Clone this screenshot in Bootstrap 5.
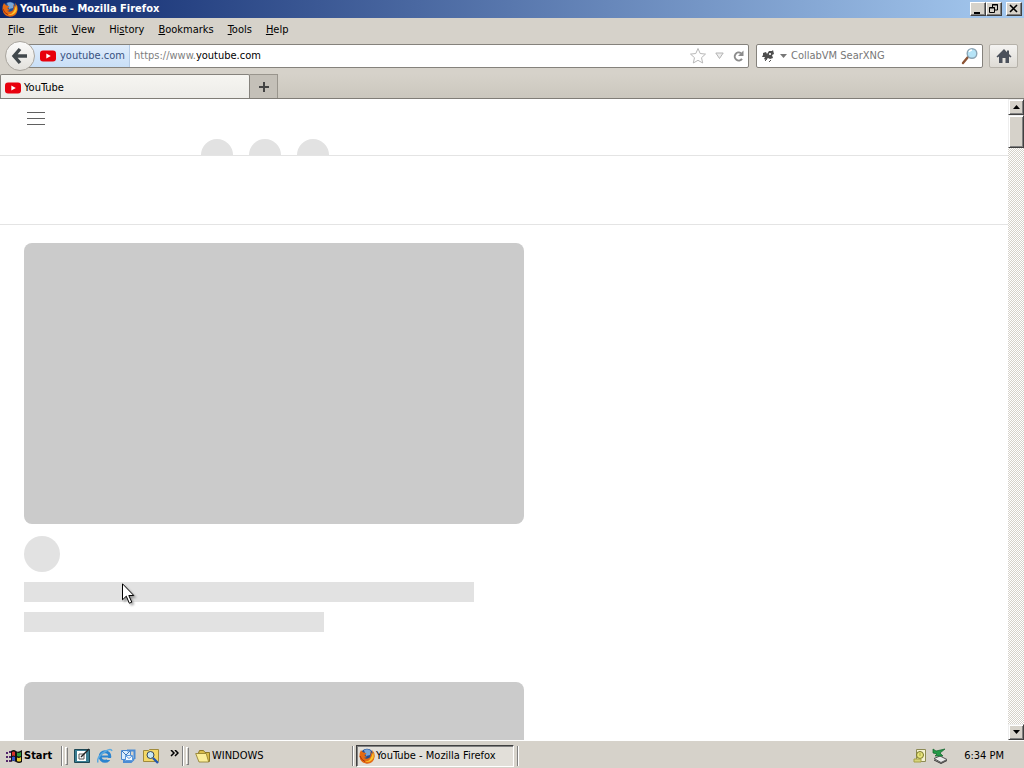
<!DOCTYPE html>
<html lang="en">
<head>
<meta charset="utf-8">
<meta name="viewport" content="width=device-width, initial-scale=1">
<title>YouTube - Mozilla Firefox</title>
<link href="https://cdn.jsdelivr.net/npm/bootstrap@5.3.0/dist/css/bootstrap.min.css" rel="stylesheet">
<style>
  :root { --face: #d6d2ca; --lo: #808080; }
  body { font: 11px/14px "DejaVu Sans Condensed", "DejaVu Sans", sans-serif; color: #000; background: var(--face); cursor: default; }
  button, input { font: inherit; color: inherit; }
  button { border: 0; padding: 0; background: none; }
  svg { display: block; flex: none; }
  .titlebar { height: 18px; padding: 0 2px; color: #fff; background: linear-gradient(90deg, #0b256b, #a6caf0); }
  .titlebar h1 { font-size: 11px; line-height: 18px; font-weight: 700; padding-left: 2px; }
  .winbtn { width: 16px; height: 14px; background: var(--face); border: 1px solid; border-color: #fff #404040 #404040 #fff; box-shadow: inset -1px -1px var(--lo); }
  .menubar { height: 22px; padding: 1px 0 0 8px; gap: 14px; }
  .toolbar-nav { height: 34px; padding: 0 6px 2px 5px; }
  .backbtn { width: 30px; height: 30px; border-radius: 50%; border: 1px solid #aaa69f; background: linear-gradient(#fbfbfa, #e3e1dc); z-index: 2; margin-right: -15px; }
  .field { height: 24px; background: #fff; border: 1px solid #85827c; border-radius: 2px; }
  .field input { border: 0; padding: 0; outline: 0; background: transparent; min-width: 0; }
  .identity { width: 109px; padding-left: 19px; gap: 4px; color: #38517f; background: linear-gradient(#dfecfb, #c9dff7); border-right: 1px solid #b5cbe5; }
  .url-prefix { color: #808080; }
  .searchbox { width: 227px; margin: 0 6px 0 7px; }
  .searchbox input::placeholder { color: #777; opacity: 1; }
  .homebtn { width: 29px; height: 24px; border: 1px solid #b6b2aa; border-radius: 2px; background: linear-gradient(#f4f3f1, #dedbd5); }
  .tabstrip { height: 25px; border-bottom: 1px solid #807d77; background: linear-gradient(var(--face), #cbc7be); }
  .tab-active { width: 250px; height: 24px; padding: 2px 0 0 4px; gap: 3px; background: linear-gradient(#f6f5f1, #edece8); border: 1px solid #85827c; border-width: 1px 1px 0; border-radius: 2px 2px 0 0; }
  .tab-new { width: 28px; height: 24px; background: #c4c0b8; border: 1px solid #99958d; border-width: 1px 1px 0 0; }
  .viewport { min-height: 0; background: #fff; }
  .masthead { height: 57px; flex: none; border-bottom: 1px solid #e4e4e4; }
  .menubtn { margin: 13px 0 0 27px; height: 13px; }
  .masthead-dots { margin: 40px 0 0 156px; gap: 16px; }
  .dot { width: 32px; height: 32px; border-radius: 50%; background: #e2e2e2; }
  .chipbar { height: 69px; flex: none; border-bottom: 1px solid #e4e4e4; }
  .feed { padding: 18px 24px 0; gap: 50px; }
  .thumb { width: 500px; height: 281px; border-radius: 8px; background: #cbcbcb; margin-bottom: 12px; }
  .avatar { width: 36px; height: 36px; border-radius: 50%; background: #e2e2e2; margin-bottom: 10px; }
  .textline { width: 450px; height: 20px; background: #e2e2e2; margin-bottom: 10px; }
  .textline-short { width: 300px; margin-bottom: 0; }
  .scroll { width: 16px; background: repeating-conic-gradient(#fff 0 25%, #d6d2ca 0 50%) 0 0 / 2px 2px; }
  .scroll button, .thumbgrip { background: var(--face); border: 1px solid; border-color: #eee #404040 #404040 #eee; box-shadow: inset 1px 1px #fff, inset -1px -1px var(--lo); }
  .scroll button { height: 16px; }
  .thumbgrip { height: 33px; }
  .taskbar { height: 28px; border-top: 1px solid #fff; padding: 2px 4px 0; }
  .startbtn { width: 52px; gap: 1px; font-weight: 700; margin-left: 2px; }
  .rule { width: 1px; height: 20px; background: var(--lo); box-shadow: 1px 0 #fff; flex: none; margin-left: 3px; }
  .grip { width: 3px; height: 18px; border: 1px solid; border-color: #fff var(--lo) var(--lo) #fff; flex: none; margin-left: 3px; }
  .quick { gap: 7px; margin-left: 6px; }
  .taskbtn { width: 160px; height: 22px; padding-left: 3px; gap: 1px; margin-left: 3px; }
  .taskbtn-on { width: 158px; background: #e2dfd9; border: 1px solid; border-color: #404040 #fff #fff #404040; box-shadow: inset 1px 1px var(--lo); padding-left: 2px; }
  .pointer { left: 122px; top: 583px; pointer-events: none; filter: drop-shadow(2px 2px 1px #0005); }
</style>
</head>
<body class="d-flex flex-column vh-100 overflow-hidden">

<svg class="d-none" aria-hidden="true">
  <symbol id="yt" viewBox="0 0 16 12"><rect width="16" height="11" y=".5" rx="3" fill="#e8000d"/><path d="M6.3 3.4v5.2L10.8 6z" fill="#fff"/></symbol>
  <symbol id="fox" viewBox="0 0 16 16">
    <circle cx="8" cy="8" r="7.2" fill="#254f94"/><path d="M5 2q4-2 7 1l-1 4-4 1z" fill="#79a6d6"/>
    <path d="M2 2Q.2 5 .6 9q1 6 7.3 6.7 6.600 0 7.700-6.700.5-4.200-2.600-7.200 1 3 .3 4.700Q12.500 4 11 3q2 5-1 7-2.500 1.500-5-.3 2 .2 3-1.200-2 .2-2.500-1.500Q6.500 6 7.500 5.500 6 4.500 4.500 4.500 3 3.800 2 2z" fill="#e56a12"/>
    <path d="M14 4q2 5-1 8-3 3-7 1.500 6 .5 8-9.500z" fill="#fbc52c"/><path d="M1 8q1 4 5 5.500" stroke="#a8300c" fill="none"/>
  </symbol>
</svg>

<header class="titlebar d-flex align-items-center flex-shrink-0">
  <svg width="16" height="16"><use href="#fox"/></svg>
  <h1 class="m-0 flex-fill">YouTube - Mozilla Firefox</h1>
  <button class="winbtn" aria-label="Minimize"><svg width="14" height="12"><path d="M3 9h6v2H3z"/></svg></button>
  <button class="winbtn" aria-label="Restore"><svg width="14" height="12" fill="none" stroke="#000"><path d="M5.500 4V1.500h5V7H8M5 2h6M2.500 4.500h5v5h-5zM2 5h6"/></svg></button>
  <button class="winbtn ms-1" aria-label="Close"><svg width="14" height="12"><path d="M3 2l7 7M10 2l-7 7" stroke="#000" stroke-width="1.600"/></svg></button>
</header>

<nav class="menubar d-flex align-items-center flex-shrink-0" aria-label="Menu">
  <button><u>F</u>ile</button><button><u>E</u>dit</button><button><u>V</u>iew</button><button>Hi<u>s</u>tory</button><button><u>B</u>ookmarks</button><button><u>T</u>ools</button><button><u>H</u>elp</button>
</nav>

<div class="toolbar-nav d-flex align-items-center flex-shrink-0">
  <button class="backbtn position-relative d-flex align-items-center justify-content-center flex-shrink-0" aria-label="Back">
    <svg width="18" height="18"><path d="M9 2L3 9l6 7M3 9h13" fill="none" stroke="#41484c" stroke-width="3.400"/></svg>
  </button>
  <div class="field d-flex align-items-center flex-fill">
    <button class="identity d-flex align-items-center h-100 flex-shrink-0"><svg width="16" height="12"><use href="#yt"/></svg>youtube.com</button>
    <label for="url" class="url-prefix ps-1">https://www.</label>
    <input id="url" class="flex-fill" value="youtube.com">
    <button aria-label="Bookmark this page"><svg width="18" height="18"><path d="M9 1.500l2.200 5 5.300.6-4 3.600 1.200 5.300L9 13.300 4.300 16l1.200-5.300-4-3.600 5.300-.6z" fill="#fff" stroke="#b8b8b8"/></svg></button>
    <button class="ms-1 ps-1" aria-label="History list"><svg width="9" height="8"><path d="M.8 1h7.400L4.500 6.500z" fill="#eee" stroke="#b4b4b4"/></svg></button>
    <button class="ms-2 me-1" aria-label="Reload"><svg width="12" height="14"><path d="M10 9.800A4 4 0 1 1 9 4.200" fill="none" stroke="#8c8c8c" stroke-width="2"/><path d="M11.500 1.500V7H6z" fill="#8c8c8c"/></svg></button>
  </div>
  <div class="searchbox field d-flex align-items-center flex-shrink-0">
    <button class="d-flex align-items-center ms-1" aria-label="Search engine">
      <svg width="15" height="16"><path d="M2 5l3-1 1 2 2-3 3 0 1-1 1 4-2 1 1 3-3 1-2-1-2 2-2-1 1-2-3 0 1-2z" fill="#4d4d4d"/><path d="M4 13l2-2M8 14l2-2M11 4v2M6 7h2" stroke="#555" fill="none"/><path d="M8 5h2v2H8z" fill="#ddd"/></svg>
      <svg class="ms-1" width="7" height="4"><path d="M0 0h7L3.500 4z" fill="#777"/></svg>
    </button>
    <input class="flex-fill ms-1" type="search" aria-label="Search" placeholder="CollabVM SearXNG">
    <button class="me-1" aria-label="Search"><svg width="17" height="18"><path d="M7 10l-5 6" stroke="#8c5435" stroke-width="2.400" stroke-linecap="round"/><circle cx="11" cy="6.500" r="4.800" fill="#b6e4f7" stroke="#8ba4b4" stroke-width="1.400"/><path d="M8 5q1-2 3-2" stroke="#fff" stroke-width="1.500" fill="none"/></svg></button>
  </div>
  <button class="homebtn d-flex align-items-center justify-content-center flex-shrink-0" aria-label="Home"><svg width="16" height="16"><path d="M8 1L.5 8.500l1 1L3 8.500V15h3.500v-5h3v5H13V8.500l1.500 1 1-1L13 6V2.500h-2v1.700z" fill="#4a505b"/></svg></button>
</div>

<div class="tabstrip d-flex flex-shrink-0" role="tablist">
  <button class="tab-active d-flex align-items-center" role="tab" aria-selected="true"><svg width="16" height="12"><use href="#yt"/></svg>YouTube</button>
  <button class="tab-new d-flex align-items-center justify-content-center" aria-label="New tab"><svg width="10" height="10"><path d="M5 0v10M0 5h10" stroke="#444" stroke-width="2"/></svg></button>
</div>

<div class="viewport d-flex flex-fill">
  <main class="d-flex flex-column flex-fill overflow-hidden">
    <div class="masthead d-flex align-items-start overflow-hidden">
      <button class="menubtn" aria-label="Guide"><svg width="18" height="13"><path d="M0 .5h18M0 6.500h18M0 12.500h18" stroke="#606060"/></svg></button>
      <div class="masthead-dots d-flex"><div class="dot"></div><div class="dot"></div><div class="dot"></div></div>
    </div>
    <div class="chipbar"></div>
    <div class="feed d-flex flex-column">
      <div><div class="thumb mw-100"></div><div class="avatar"></div><div class="textline mw-100"></div><div class="textline textline-short mw-100"></div></div>
      <div><div class="thumb mw-100"></div></div>
    </div>
  </main>
  <div class="scroll d-flex flex-column flex-shrink-0">
    <button class="d-flex align-items-center justify-content-center" aria-label="Scroll up"><svg width="7" height="4"><path d="M0 4h7L3.500 0z"/></svg></button>
    <div class="thumbgrip"></div>
    <button class="d-flex align-items-center justify-content-center mt-auto" aria-label="Scroll down"><svg width="7" height="4"><path d="M0 0h7L3.500 4z"/></svg></button>
  </div>
</div>

<footer class="taskbar d-flex align-items-center flex-shrink-0">
  <button class="startbtn d-flex align-items-center"><svg width="17" height="16"><path d="M5 3q3-2 5 0t6-1v12q-3 2-6 0t-5 0z" fill="#111"/><path d="M6 4q2-1 3 0v4q-2-1-3 0z" fill="#d8322b"/><path d="M11 4.500q2 1 4-.5v4q-2 1-4 0z" fill="#2d9a3c"/><path d="M6 9q2-1 3 0v4q-2-1-3 0z" fill="#3456c8"/><path d="M11 9.500q2 1 4-.5v4q-2 1-4 0z" fill="#e8c92d"/><path d="M0 4h2v2H0zM3 3h2v2H3zM0 8h2v2H0zM3 8h2v2H3zM0 12h2v2H0zM3 12h2v2H3z" fill="#54276b"/></svg>Start</button>
  <div class="rule"></div><div class="grip"></div>
  <div class="quick d-flex align-items-center">
    <button aria-label="Show Desktop"><svg width="16" height="16"><path d="M.5 1.500h15v13H.5z" fill="#3a7d92" stroke="#1d4754"/><path d="M3 3h9v10H3z" fill="#fff"/><path d="M5 6h5v5H5z" fill="none" stroke="#555"/><path d="M7 9l8-8" stroke="#222" stroke-width="1.500"/></svg></button>
    <button aria-label="Internet Explorer"><svg width="16" height="16"><circle cx="8" cy="8.500" r="4.800" fill="none" stroke="#2a83cf" stroke-width="3"/><path d="M4 8.500h9" stroke="#2a83cf" stroke-width="2"/><path d="M10 10h6v2h-6z" fill="#d6d2ca"/><path d="M1 14.500Q-1 9 9 3q5-3 6 0" stroke="#5ba9df" stroke-width="1.500" fill="none"/></svg></button>
    <button aria-label="Outlook Express"><svg width="16" height="16"><path d="M1.500 2.500h9v9h-9z" fill="#d9ecfc" stroke="#4a88cf"/><path d="M2 3l4 4 4-4" stroke="#3a75bb" fill="none"/><path d="M7 2.500h7.500V11M4 11v3h7l3-3" stroke="#4b8bd4" stroke-width="2" fill="none"/><path d="M5.500 7.500h7v5h-7z" fill="#f4faff" stroke="#5b98dc"/><path d="M6 8l3 2.500L12 8" stroke="#5b98dc" fill="none"/></svg></button>
    <button aria-label="Search files"><svg width="16" height="16"><path d="M.5 2.500h5l1-1h9v12H.5z" fill="#f4d867" stroke="#a08a3b"/><circle cx="7.500" cy="7" r="3.500" fill="#c6e8f7" stroke="#345"/><path d="M10 10l5 5" stroke="#2358b0" stroke-width="2.400"/></svg></button>
    <button class="pb-1" aria-label="More"><svg class="ms-1" width="9" height="7"><path d="M1 0l3 3-3 3M5 0l3 3-3 3" fill="none" stroke="#000" stroke-width="1.500"/></svg></button>
  </div>
  <div class="rule"></div><div class="grip"></div>
  <button class="taskbtn d-flex align-items-center"><svg width="16" height="16"><path d="M3.500 5l1-2.500h4l1.500 2h4.500v9h-3z" fill="#d9bd4c" stroke="#8c7828"/><path d="M.7 5.500h10.500l2.500 8.500H4z" fill="#fbee9a" stroke="#8c7828" stroke-width=".8"/></svg>WINDOWS</button>
  <div class="rule ms-0"></div>
  <button class="taskbtn taskbtn-on d-flex align-items-center"><svg width="16" height="16"><use href="#fox"/></svg>YouTube - Mozilla Firefox</button>
  <div class="rule"></div>
  <div class="d-flex align-items-center ms-auto me-3">
    <svg width="15" height="16"><path d="M3.500 1.500h9v12h-9z" fill="#f5f3d2" stroke="#8d8b54"/><circle cx="7" cy="7" r="3.500" fill="#e7e47a" stroke="#77752d"/><path d="M7 5v3M1 11h7v3H1z" stroke="#a5a246" fill="#d8d47a"/></svg>
    <svg class="ms-1" width="16" height="16"><path d="M2 10.500L8 8l7 3.500L9 14.500z" fill="#e9e9e9" stroke="#555"/><path d="M2 12l7 3.500L15 12.500" fill="none" stroke="#333"/><path d="M1 1l3 2 9-2-5 4 3 3H3l2-2-4-1z" fill="#259b48" stroke="#11622b" stroke-width=".7"/></svg>
    <time class="ms-3">6:34 PM</time>
  </div>
</footer>

<svg class="pointer position-absolute" width="13" height="22" aria-hidden="true"><path d="M.5.800v16l3.800-3.600 3 7 2.500-1-3-6.700h5z" fill="#fff" stroke="#000"/></svg>
<script src="https://cdn.jsdelivr.net/npm/bootstrap@5.3.0/dist/js/bootstrap.bundle.min.js"></script>
</body>
</html>
